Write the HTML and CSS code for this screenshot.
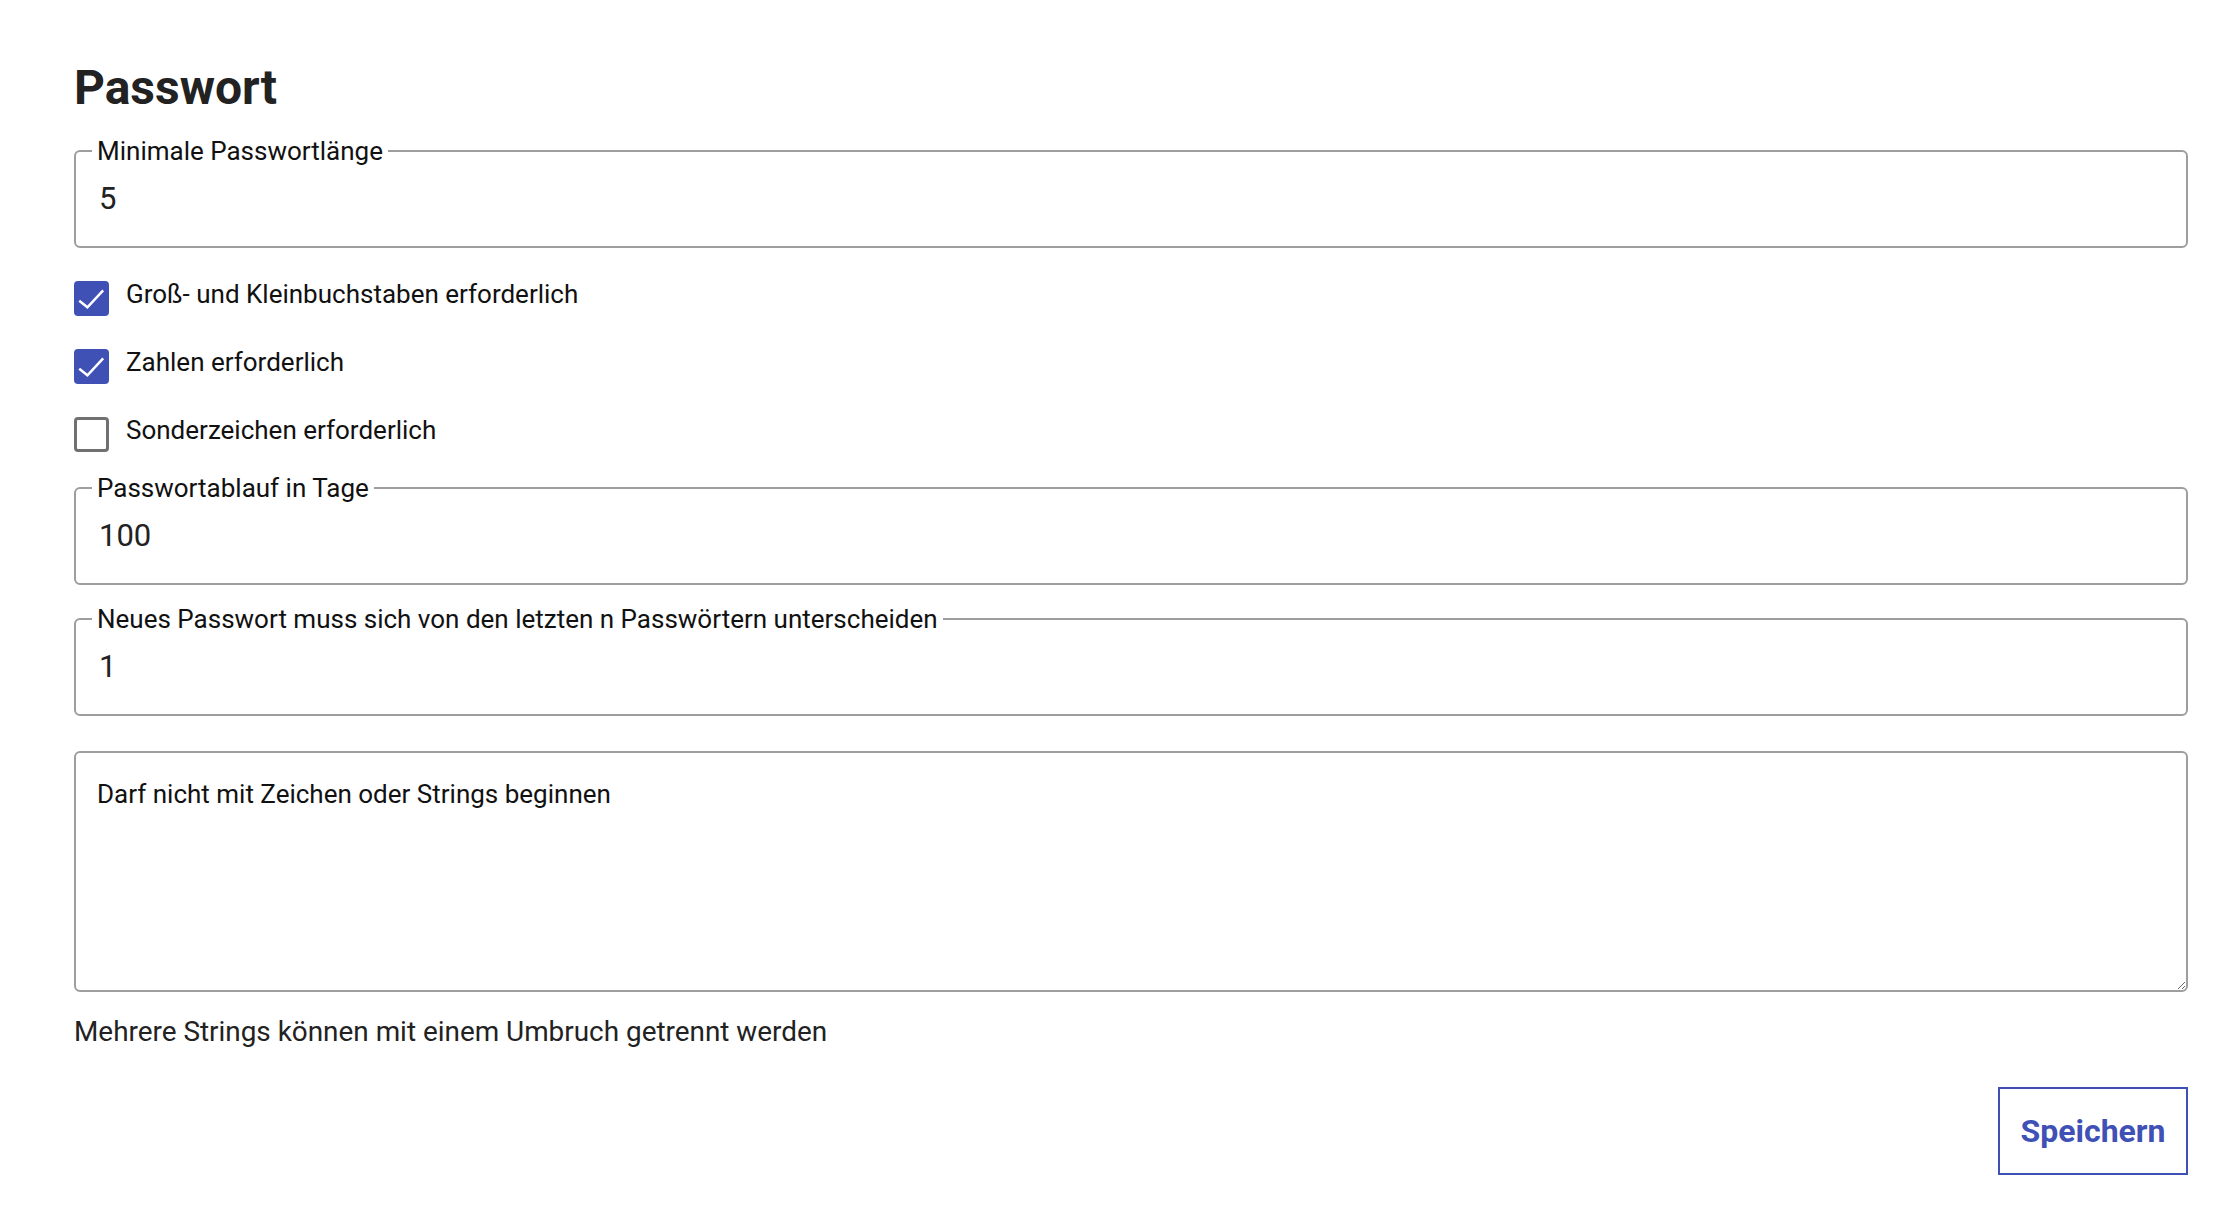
FILE: index.html
```html
<!DOCTYPE html>
<html lang="de">
<head>
<meta charset="utf-8">
<title>Passwort</title>
<link rel="stylesheet" href="styles.css">
</head>
<body>
<main class="page">
  <h1 class="title">Passwort</h1>

  <fieldset class="field field-first">
    <legend class="field-label">Minimale Passwortlänge</legend>
    <input class="field-input" type="text" value="5">
  </fieldset>

  <div class="checks">
    <label class="check">
      <span class="box box-on"><svg viewBox="0 0 24 24" class="tick"><path d="M3.6 13.6 L9.2 18 L20 6.4"/></svg></span>
      <span class="check-text">Groß- und Kleinbuchstaben erforderlich</span>
    </label>
    <label class="check">
      <span class="box box-on"><svg viewBox="0 0 24 24" class="tick"><path d="M3.6 13.6 L9.2 18 L20 6.4"/></svg></span>
      <span class="check-text">Zahlen erforderlich</span>
    </label>
    <label class="check">
      <span class="box box-off"></span>
      <span class="check-text">Sonderzeichen erforderlich</span>
    </label>
  </div>

  <fieldset class="field field-second">
    <legend class="field-label">Passwortablauf in Tage</legend>
    <input class="field-input" type="text" value="100">
  </fieldset>

  <fieldset class="field field-third">
    <legend class="field-label">Neues Passwort muss sich von den letzten n Passwörtern unterscheiden</legend>
    <input class="field-input" type="text" value="1">
  </fieldset>

  <textarea class="area">Darf nicht mit Zeichen oder Strings beginnen</textarea>
  <p class="helper">Mehrere Strings können mit einem Umbruch getrennt werden</p>

  <div class="actions">
    <button class="save" type="button">Speichern</button>
  </div>
</main>
</body>
</html>
```

FILE: styles.css
```css
html, body {
  margin: 0;
  padding: 0;
  background: #ffffff;
}

body {
  font-family: Roboto, "Liberation Sans", Arial, sans-serif;
  color: #212121;
}

.page {
  display: flex;
  flex-direction: column;
  padding: 60px 50px 40px 74px;
}

.title {
  margin: 0;
  font-size: 48px;
  line-height: 56px;
  font-weight: 700;
  color: #222222;
}

.field {
  margin: 0;
  border: 2px solid #9e9e9e;
  border-radius: 6px;
  padding: 0 16px 16px 16px;
  min-width: 0;
}

.field-first { margin-top: 20px; }
.field-second { margin-top: 21px; }
.field-third { margin-top: 19px; }

.field-label {
  padding: 0 5px;
  font-size: 26px;
  line-height: 30px;
  color: #111111;
}

.field-input {
  display: block;
  width: 100%;
  box-sizing: border-box;
  height: 64px;
  border: none;
  outline: none;
  padding: 0 7px;
  margin: 0;
  font-family: Roboto, "Liberation Sans", Arial, sans-serif;
  font-size: 31px;
  color: #222222;
  background: transparent;
}

.checks {
  display: flex;
  flex-direction: column;
  gap: 31px;
  margin-top: 31px;
}

.check {
  display: flex;
  align-items: flex-start;
  gap: 17px;
  height: 37px;
}

.box {
  box-sizing: border-box;
  width: 35px;
  height: 35px;
  margin-top: 2px;
  border-radius: 4px;
  flex: none;
  display: flex;
}

.box-on {
  background: #3f51b5;
}

.box-off {
  border: 3px solid #717171;
}

.tick {
  width: 35px;
  height: 35px;
  fill: none;
  stroke: #ffffff;
  stroke-width: 1.7;
}

.check-text {
  font-size: 26px;
  line-height: 30px;
  color: #111111;
}

.area {
  display: block;
  margin-top: 35px;
  box-sizing: border-box;
  width: 100%;
  height: 241px;
  border: 2px solid #9e9e9e;
  border-radius: 6px;
  padding: 26px 21px;
  font-family: Roboto, "Liberation Sans", Arial, sans-serif;
  font-size: 26px;
  line-height: 30px;
  color: #111111;
  resize: vertical;
  outline: none;
}

.helper {
  margin: 24px 0 0 0;
  font-size: 27.9px;
  line-height: 32px;
  color: #222222;
}

.actions {
  display: flex;
  justify-content: flex-end;
  margin-top: 39px;
}

.save {
  box-sizing: border-box;
  width: 190px;
  height: 88px;
  border: 2px solid #3f51b5;
  border-radius: 0;
  background: #ffffff;
  color: #3f51b5;
  font-family: Roboto, "Liberation Sans", Arial, sans-serif;
  font-size: 32px;
  font-weight: 700;
  padding: 0;
  cursor: pointer;
}
```
